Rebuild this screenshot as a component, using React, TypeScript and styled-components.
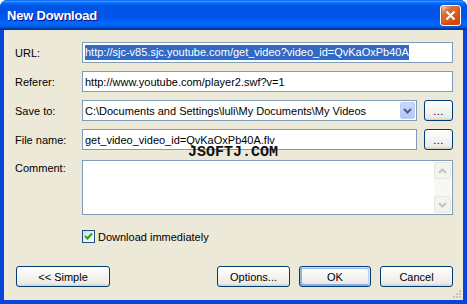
import styled, { createGlobalStyle, css } from "styled-components";

const GlobalStyle = createGlobalStyle`
  html, body {
    margin: 0;
    padding: 0;
  }
  body {
    width: 467px;
    height: 304px;
    overflow: hidden;
    background: #fff;
    font-family: Tahoma, "Liberation Sans", Arial, sans-serif;
  }
`;

const Window = styled.div`
  width: 467px;
  height: 304px;
  display: flex;
  flex-direction: column;
  background: #0a44d8;
  border-radius: 7px 7px 0 0;
  box-sizing: border-box;
  overflow: hidden;
`;

const TitleBar = styled.div`
  height: 30px;
  flex: none;
  display: flex;
  align-items: center;
  justify-content: space-between;
  padding: 0 6px 0 7px;
  background: linear-gradient(
    to bottom,
    #0058ee 0%,
    #3593ff 4%,
    #288eff 6%,
    #127dff 8%,
    #036ffc 10%,
    #0262ee 14%,
    #0057e5 20%,
    #0054e3 24%,
    #0055eb 56%,
    #005bf5 66%,
    #026afe 76%,
    #0062ef 86%,
    #0052d6 92%,
    #0040ab 94%,
    #003092 100%
  );
`;

const Title = styled.span`
  color: #fff;
  font-family: "Liberation Sans", Arial, sans-serif;
  font-weight: bold;
  font-size: 13px;
  letter-spacing: -0.2px;
  text-shadow: 1px 1px #0f1089;
  padding-top: 1px;
`;

const CloseButton = styled.div`
  width: 21px;
  height: 21px;
  box-sizing: border-box;
  border: 1px solid #fff;
  border-radius: 3px;
  display: flex;
  align-items: center;
  justify-content: center;
  background: radial-gradient(
    circle at 90% 90%,
    #cc4600 0%,
    #dc6527 55%,
    #cd7546 70%,
    #ffccb2 90%,
    #fff 100%
  );
  box-shadow: inset 0 -1px 2px 1px #da4600;
`;

const Body = styled.div`
  flex: 1;
  margin: 0 4px 4px 4px;
  background: #ece9d8;
  display: flex;
  flex-direction: column;
  padding: 12px 10px 0 11px;
  position: relative;
  font-size: 11px;
  color: #000;
`;

const Row = styled.div<{ $tall?: boolean; $top?: number }>`
  display: flex;
  align-items: ${(p) => (p.$tall ? "flex-start" : "center")};
  height: ${(p) => (p.$tall ? 55 : 21)}px;
  margin-top: ${(p) => p.$top ?? 0}px;
  position: relative;
`;

const Label = styled.div<{ $tall?: boolean }>`
  width: 67px;
  flex: none;
  ${(p) =>
    p.$tall &&
    css`
      padding-top: 2px;
    `}
`;

const fieldBox = css`
  height: 21px;
  box-sizing: border-box;
  border: 1px solid #7f9db9;
  background: #fff;
`;

const TextBox = styled.div`
  ${fieldBox};
  flex: 1;
  display: flex;
  align-items: center;
  padding: 0 2px;
  white-space: nowrap;
  overflow: hidden;
`;

const Selected = styled.span`
  background: #316ac5;
  color: #fff;
  line-height: 15px;
`;

const Combo = styled.div`
  ${fieldBox};
  flex: 1;
  display: flex;
  align-items: center;
  padding: 0 1px 0 2px;
  white-space: nowrap;
  overflow: hidden;
`;

const ComboText = styled.span`
  flex: 1;
`;

const DropButton = styled.div`
  width: 15px;
  height: 17px;
  flex: none;
  border-radius: 2px;
  background: linear-gradient(to bottom, #c9d8fc, #b4c8f6);
  border: 1px solid #bccef6;
  box-sizing: border-box;
  display: flex;
  align-items: center;
  justify-content: center;
`;

const DotsButton = styled.div`
  width: 29px;
  height: 21px;
  margin-left: 7px;
  flex: none;
  box-sizing: border-box;
  border: 1px solid #003c74;
  border-radius: 3px;
  background: linear-gradient(180deg, #fff, #ecebe6 86%, #d6d0c5);
  display: flex;
  align-items: flex-end;
  justify-content: center;
  padding-bottom: 5px;
  line-height: 8px;
  letter-spacing: 0.5px;
`;

const Memo = styled.div`
  ${fieldBox};
  height: 55px;
  flex: 1;
  display: flex;
  justify-content: flex-end;
  padding: 1px;
`;

const ScrollBar = styled.div`
  width: 17px;
  display: flex;
  flex-direction: column;
  justify-content: space-between;
  background: #f7f7f3;
`;

const ScrollArrow = styled.div`
  width: 17px;
  height: 17px;
  box-sizing: border-box;
  border: 1px solid #e8e6df;
  border-radius: 2px;
  background: #f4f3ee;
  display: flex;
  align-items: center;
  justify-content: center;
`;

// watermark stamped over the dialog, half on the file name box
const Watermark = styled.div`
  position: absolute;
  left: 173px;
  top: 17px;
  font-family: "Liberation Mono", "Courier New", monospace;
  font-weight: bold;
  font-size: 15px;
  line-height: 13px;
  color: #111;
  pointer-events: none;
`;

const CheckRow = styled.div`
  display: flex;
  align-items: center;
  margin-top: 15px;
  padding-left: 67px;
  height: 13px;
  gap: 3px;
`;

const CheckBox = styled.div`
  width: 13px;
  height: 13px;
  box-sizing: border-box;
  border: 1px solid #1c5180;
  background: linear-gradient(135deg, #dcdcd7, #fff);
  display: flex;
  align-items: center;
  justify-content: center;
`;

const ButtonRow = styled.div`
  margin-top: auto;
  margin-bottom: 13px;
  padding-left: 1px;
  display: flex;
  align-items: center;
  gap: 9px;
`;

const Spacer = styled.div`
  flex: 1;
`;

const PushButton = styled.div<{ $w: number; $default?: boolean }>`
  width: ${(p) => p.$w}px;
  height: 21px;
  box-sizing: border-box;
  border: 1px solid #003c74;
  border-radius: 3px;
  background: linear-gradient(180deg, #fff, #ecebe6 86%, #d6d0c5);
  display: flex;
  align-items: center;
  justify-content: center;
  ${(p) =>
    p.$default &&
    css`
      box-shadow: inset -1px 1px #cee7ff, inset 1px 2px #98b8ea,
        inset -2px 2px #bcd4f6, inset 1px -1px #89ade4,
        inset 2px -2px #89ade4;
    `}
`;

const Grip = styled.svg`
  position: absolute;
  right: 1px;
  bottom: 1px;
`;

const Chevron = ({ color, up }: { color: string; up?: boolean }) => (
  <svg width="9" height="6" viewBox="0 0 9 6">
    <path
      d={up ? "M1 5 L4.5 1.5 L8 5" : "M1 1 L4.5 4.5 L8 1"}
      fill="none"
      stroke={color}
      strokeWidth="2"
    />
  </svg>
);

export default function App() {
  return (
    <>
      <GlobalStyle />
      <Window>
        <TitleBar>
          <Title>New Download</Title>
          <CloseButton>
            <svg width="11" height="11" viewBox="0 0 11 11">
              <path d="M1.5 1.5 L9.5 9.5 M9.5 1.5 L1.5 9.5" stroke="#fff" strokeWidth="2" />
            </svg>
          </CloseButton>
        </TitleBar>
        <Body>
          <Row>
            <Label>URL:</Label>
            <TextBox>
              <Selected>http://sjc-v85.sjc.youtube.com/get_video?video_id=QvKaOxPb40A</Selected>
            </TextBox>
          </Row>
          <Row $top={8}>
            <Label>Referer:</Label>
            <TextBox>http://www.youtube.com/player2.swf?v=1</TextBox>
          </Row>
          <Row $top={8}>
            <Label>Save to:</Label>
            <Combo>
              <ComboText>C:\Documents and Settings\luli\My Documents\My Videos</ComboText>
              <DropButton>
                <Chevron color="#4d6185" />
              </DropButton>
            </Combo>
            <DotsButton>...</DotsButton>
          </Row>
          <Row $top={8}>
            <Label>File name:</Label>
            <TextBox>get_video_video_id=QvKaOxPb40A.flv</TextBox>
            <DotsButton>...</DotsButton>
            <Watermark>JSOFTJ.COM</Watermark>
          </Row>
          <Row $tall $top={10}>
            <Label $tall>Comment:</Label>
            <Memo>
              <ScrollBar>
                <ScrollArrow>
                  <Chevron color="#c6c4ba" up />
                </ScrollArrow>
                <ScrollArrow>
                  <Chevron color="#c6c4ba" />
                </ScrollArrow>
              </ScrollBar>
            </Memo>
          </Row>
          <CheckRow>
            <CheckBox>
              <svg width="9" height="9" viewBox="0 0 9 9">
                <path d="M1 4 L3.5 6.5 L8 1.5" fill="none" stroke="#21a121" strokeWidth="2" />
              </svg>
            </CheckBox>
            <span>Download immediately</span>
          </CheckRow>
          <ButtonRow>
            <PushButton $w={94}>&lt;&lt; Simple</PushButton>
            <Spacer />
            <PushButton $w={73}>Options...</PushButton>
            <PushButton $w={72} $default>
              OK
            </PushButton>
            <PushButton $w={73}>Cancel</PushButton>
          </ButtonRow>
          <Grip width="10" height="10" viewBox="0 0 10 10">
            <rect x="7" y="1" width="2" height="2" fill="#c7c3b4" />
            <rect x="4" y="4" width="2" height="2" fill="#c7c3b4" />
            <rect x="7" y="4" width="2" height="2" fill="#c7c3b4" />
            <rect x="1" y="7" width="2" height="2" fill="#c7c3b4" />
            <rect x="4" y="7" width="2" height="2" fill="#c7c3b4" />
            <rect x="7" y="7" width="2" height="2" fill="#c7c3b4" />
          </Grip>
        </Body>
      </Window>
    </>
  );
}
